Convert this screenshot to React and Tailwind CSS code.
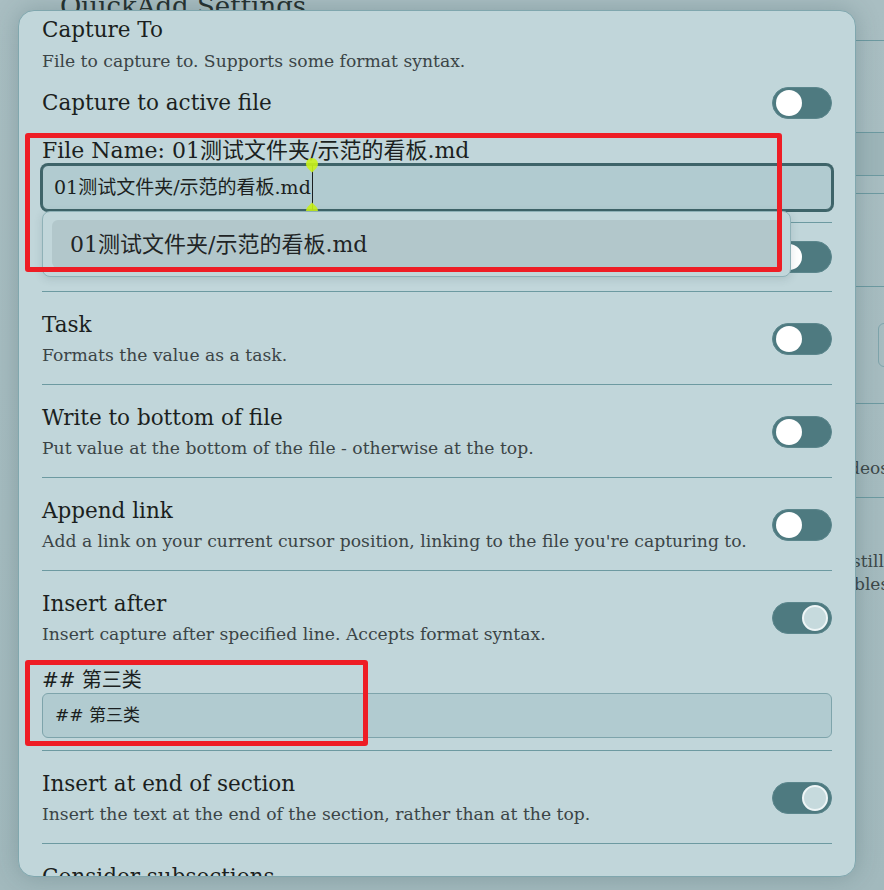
import React from 'react';

const serif = { fontFamily: '"DejaVu Serif", "Noto Sans CJK SC", serif' };

function Toggle({ on }) {
  return (
    <div className="flex h-[32px] w-[60px] shrink-0 items-center rounded-full border border-[#5b868c] bg-[#4e7a80] p-[3px]">
      {on ? (
        <div className="ml-auto h-[26px] w-[26px] rounded-full border-2 border-[#eef5f6] bg-[#c6dadd]" />
      ) : (
        <div className="h-[26px] w-[26px] rounded-full bg-white" />
      )}
    </div>
  );
}

function Setting({ title, desc, on, children, last }) {
  return (
    <div className={`pt-[18px] ${children ? 'pb-[12px]' : 'pb-[16px]'} ${last ? '' : 'border-b border-[#6d9aa1]'}`}>
      <div className="flex items-center justify-between gap-4">
        <div>
          <div className="text-[21.5px] leading-[30px] text-[#1b1f20]">{title}</div>
          {desc && <div className="mt-[2px] text-[17.2px] leading-[26px] text-[#3b4446]">{desc}</div>}
        </div>
        {on !== undefined && <Toggle on={on} />}
      </div>
      {children}
    </div>
  );
}

export default function App() {
  return (
    <div className="relative h-[890px] w-[884px] overflow-hidden bg-gradient-to-b from-[#a9bec2] to-[#a2b9bd]" style={serif}>
      {/* settings page behind the modal */}
      <div className="pl-[60px]">
        <h2 className="-mt-[14px] h-[54px] text-[26px] leading-[40px] text-[#26302f]">QuickAdd Settings</h2>
        <div className="h-[92px] border-t border-[#6d9aa1]" />
        <div className="h-[43px] border-t border-[#6d9aa1] bg-[#9db5b9]" />
        <div className="h-[18px] border-t border-[#6d9aa1]" />
        <div className="h-[93px] border-t border-[#6d9aa1]" />
        <div className="h-[117px] border-t border-[#6d9aa1] pl-[818px] pt-[36px]">
          <div className="h-[44px] w-[60px] rounded-[6px] border border-[#7ea4ab]" />
        </div>
        <div className="h-[94px] border-t border-[#6d9aa1] pl-[789px] pt-[52px] text-[17px] whitespace-nowrap text-[#3d4849]">
          deos
        </div>
        <div className="h-[150px] border-t border-[#6d9aa1] pl-[792px] pt-[52px] text-[17px] leading-[23px] whitespace-nowrap text-[#3d4849]">
          <div>still</div>
          <div className="pl-[2px]">bles</div>
        </div>
      </div>

      {/* modal */}
      <div className="absolute left-[18px] top-[10px] h-[867px] w-[838px] overflow-hidden rounded-[16px] border border-[#80a7ae] bg-[#c1d6da] px-[23px] pt-[4px] shadow-[0_0_24px_rgba(40,70,75,0.25)]">
        <div className="text-[21.5px] leading-[30px] text-[#1b1f20]">Capture To</div>
        <div className="mt-[3px] text-[17.2px] leading-[26px] text-[#3b4446]">
          File to capture to. Supports some format syntax.
        </div>
        <div className="mt-[13px] flex h-[32px] items-center justify-between">
          <div className="text-[21.5px] leading-[30px] text-[#1b1f20]">Capture to active file</div>
          <Toggle on={false} />
        </div>

        <div className="border-b border-[#6d9aa1] pb-[12px]">
          <div className="mt-[19px] text-[22px] leading-[26px] text-[#1b1f20]">File Name: 01测试文件夹/示范的看板.md</div>
          <div className="relative mt-[1px]">
            <div className="flex h-[45px] items-center rounded-[6px] border border-[#3e6469] bg-[#b1cbd0] pl-[11px] text-[19px] text-[#1b1f20] ring-2 ring-[#3e6469]">
              <span>01测试文件夹/示范的看板.md</span>
              <span className="relative ml-[1px] h-[45px] w-[1px] bg-[#1b1f20]">
                <span className="absolute -top-[7px] -left-[6px] h-[12px] w-[12px] rotate-45 rounded-full rounded-br-none bg-[#c9f21a]/90" />
                <span className="absolute -bottom-[7px] -left-[6px] h-[12px] w-[12px] rotate-45 rounded-full rounded-tl-none bg-[#c9f21a]/90" />
              </span>
            </div>
            <div className="absolute left-0 top-[46px] z-10 h-[66px] w-[749px] rounded-[8px] border border-[#8fb1b7] bg-[#c1d6da] py-[8px] pl-[9px] pr-[8px] shadow-[0_2px_8px_rgba(40,70,75,0.15)]">
              <div className="flex h-[48px] items-center rounded-[6px] bg-[#b2c7cb] pl-[18px] text-[22px] text-[#1f2425]">
                01测试文件夹/示范的看板.md
              </div>
            </div>
          </div>
        </div>

        <div className="flex h-[69px] items-center justify-between border-b border-[#6d9aa1]">
          <div className="text-[21.5px] text-[#1b1f20]">Create file if it doesn't exist</div>
          <Toggle on={false} />
        </div>

        <Setting title="Task" desc="Formats the value as a task." on={false} />
        <Setting title="Write to bottom of file" desc="Put value at the bottom of the file - otherwise at the top." on={false} />
        <Setting
          title="Append link"
          desc="Add a link on your current cursor position, linking to the file you're capturing to."
          on={false}
        />
        <Setting title="Insert after" desc="Insert capture after specified line. Accepts format syntax." on={true}>
          <div className="mt-[20px] text-[20px] leading-[26px] text-[#1b1f20]">## 第三类</div>
          <div className="flex h-[45px] items-center rounded-[6px] border border-[#7ea4ab] bg-[#b1cbd0] pl-[12px] text-[17px] text-[#1b1f20]">
            ## 第三类
          </div>
        </Setting>
        <Setting
          title="Insert at end of section"
          desc="Insert the text at the end of the section, rather than at the top."
          on={true}
        />
        <Setting title="Consider subsections" desc="Also consider subsections when inserting." last />
      </div>

      {/* red annotation boxes */}
      <div className="absolute left-[25px] top-[133px] z-20 h-[139px] w-[757px] rounded-[3px] border-[5px] border-[#ee1d25]" />
      <div className="absolute left-[25px] top-[660px] z-20 h-[86px] w-[343px] rounded-[3px] border-[5px] border-[#ee1d25]" />
    </div>
  );
}
